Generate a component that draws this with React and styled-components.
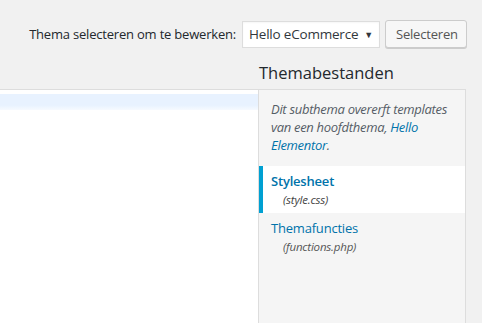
import React from 'react'
import styled, { createGlobalStyle } from 'styled-components'

const GlobalStyle = createGlobalStyle`
  html, body {
    margin: 0;
    padding: 0;
    background: #f1f1f1;
  }
  body {
    font-family: "Open Sans", "Noto Sans", sans-serif;
    font-size: 13px;
    color: #444;
    letter-spacing: -0.2px;
  }
`

const files = [
  { name: 'Stylesheet', file: 'style.css', current: true },
  { name: 'Themafuncties', file: 'functions.php' }
]

const App = () => {
  return (
    <>
      <GlobalStyle />
      <Page>
        <TopBar>
          <SelectLabel>Thema selecteren om te bewerken:</SelectLabel>
          <FakeSelect>
            <span>Hello eCommerce</span>
            <SelectArrow>▼</SelectArrow>
          </FakeSelect>
          <Button>Selecteren</Button>
        </TopBar>

        <EditorLayout>
          <SidebarTitle>Themabestanden</SidebarTitle>
          <Editor>
            <ActiveLine />
          </Editor>
          <FileSidebar>
            <Notice>
              Dit subthema overerft templates van een hoofdthema, <NoticeLink>Hello Elementor</NoticeLink>.
            </Notice>
            <FileList>
              {files.map((f) => (
                <FileItem key={f.file} $current={f.current}>
                  <FileName $current={f.current}>{f.name}</FileName>
                  <FilePath $current={f.current}>({f.file})</FilePath>
                </FileItem>
              ))}
            </FileList>
          </FileSidebar>
        </EditorLayout>
      </Page>
    </>
  )
}

const Page = styled.div`
  height: 323px;
  overflow: hidden;
  background: #f1f1f1;
`
const TopBar = styled.div`
  display: flex;
  justify-content: flex-end;
  align-items: center;
  gap: 6px;
  padding: 20px 15px 0 0;
  height: 28px;
`
const SelectLabel = styled.label`
  font-size: 13px;
  color: #23282d;
`
const FakeSelect = styled.div`
  box-sizing: border-box;
  display: flex;
  align-items: center;
  justify-content: space-between;
  width: 138px;
  height: 27px;
  padding: 0 6px 0 6px;
  background: #fff;
  border: 1px solid #ddd;
  box-shadow: inset 0 1px 2px rgba(0, 0, 0, 0.04);
  font-size: 13.5px;
  color: #32373c;
`
const SelectArrow = styled.span`
  font-size: 9px;
  color: #32373c;
`
const Button = styled.button`
  box-sizing: border-box;
  height: 28px;
  width: 82px;
  padding: 0 10px;
  margin-left: -1px;
  font-family: inherit;
  font-size: 13px;
  letter-spacing: -0.2px;
  color: #555;
  background: #f7f7f7;
  border: 1px solid #ccc;
  border-radius: 3px;
  box-shadow: 0 1px 0 #ccc;
`
const EditorLayout = styled.div`
  display: grid;
  grid-template-columns: 258px 208px;
  grid-template-rows: 41px 1fr;
  height: 275px;
`
const SidebarTitle = styled.h2`
  grid-column: 2;
  grid-row: 1;
  margin: 0;
  padding: 15px 0 0 1px;
  font-size: 16.5px;
  font-weight: 400;
  letter-spacing: 0;
  color: #23282d;
  line-height: 20px;
`
const Editor = styled.div`
  grid-column: 1;
  grid-row: 2;
  background: #fff;
  border-top: 1px solid #ddd;
  padding-top: 4px;
`
const ActiveLine = styled.div`
  height: 16px;
  background: linear-gradient(#e8f2ff 70%, #f6faff);
`
const FileSidebar = styled.div`
  grid-column: 2;
  grid-row: 2;
  box-sizing: border-box;
  background: #f5f5f5;
  border: 1px solid #ddd;
  border-bottom: none;
`
const Notice = styled.p`
  margin: 0;
  padding: 10px 10px 12px 12px;
  font-style: italic;
  font-size: 13px;
  letter-spacing: -0.3px;
  line-height: 18px;
  color: #555d66;
`
const NoticeLink = styled.a`
  color: #0073aa;
  text-decoration: none;
`
const FileList = styled.ul`
  list-style: none;
  margin: 0;
  padding: 0;
`
const FileItem = styled.li`
  box-sizing: border-box;
  height: 47px;
  padding: 5px 12px 0 ${({ $current }) => ($current ? '8px' : '12px')};
  background: ${({ $current }) => ($current ? '#fff' : 'transparent')};
  border-left: ${({ $current }) => ($current ? '4px solid #00a0d2' : 'none')};
`
const FileName = styled.div`
  font-size: 13px;
  line-height: 20px;
  color: #0073aa;
  font-weight: ${({ $current }) => ($current ? 600 : 400)};
`
const FilePath = styled.div`
  padding-left: 12px;
  font-size: 11.5px;
  line-height: 18px;
  font-style: italic;
  color: ${({ $current }) => ($current ? '#444' : '#555')};
`

export default App
